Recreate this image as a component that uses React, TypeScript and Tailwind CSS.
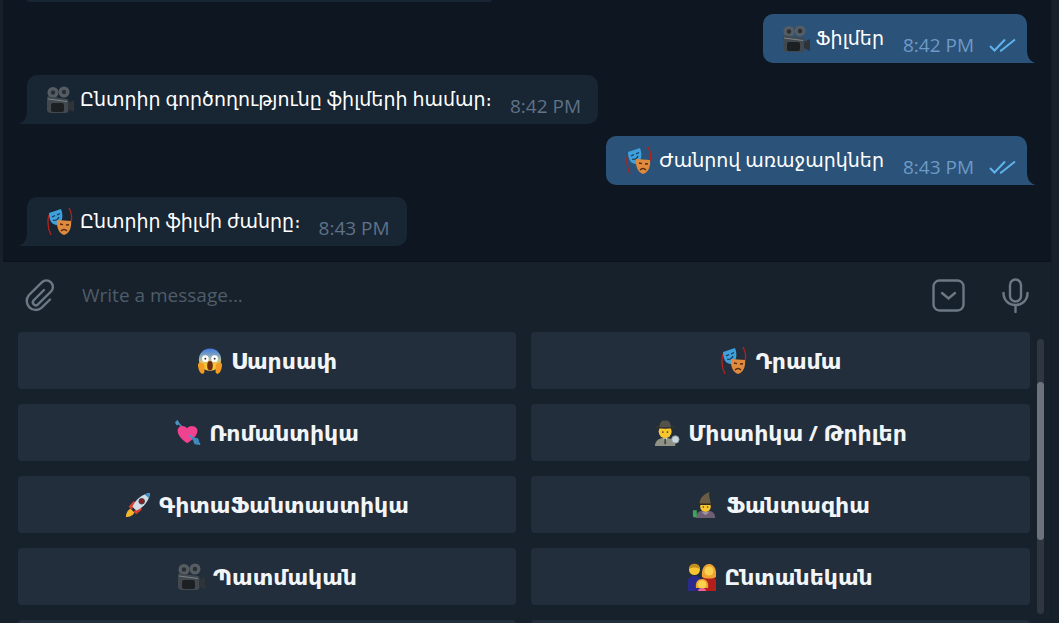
const Camera = () => (
  <svg viewBox="0 0 28 28" className="w-[28px] h-[28px] shrink-0">
    <circle cx="7" cy="6.500" r="5.500" fill="#555d63" />
    <circle cx="7" cy="6.500" r="2.200" fill="#2a2f33" />
    <circle cx="18" cy="6" r="5.500" fill="#555d63" />
    <circle cx="18" cy="6" r="2.200" fill="#2a2f33" />
    <path d="M1 12c0-1 1-2 2-1.500l18 2.500c1 .2 1.500 1 1.500 2V24c0 2-1 3-3 3H5c-2 0-4-1-4-3z" fill="#41484e" />
    <rect x="5" y="17" width="13" height="9" rx="2" fill="#1c2023" />
    <path d="M22 17l6-3v12l-6-3z" fill="#2f3438" />
    <path d="M2 13l19 2.500" stroke="#7b848b" strokeWidth="1" />
  </svg>
);

const Masks = () => (
  <svg viewBox="0 0 28 28" className="w-[28px] h-[28px] shrink-0">
    <path d="M3 7C1 14 2 21 5 27" stroke="#b3201c" strokeWidth="1.400" fill="none" />
    <path d="M23 0c3 5 3 10 2 14" stroke="#b3201c" strokeWidth="1.400" fill="none" />
    <path d="M3 5l12-4c2 5 2 11-1 14-2 3-6 2-8 0-2-2-3-6-3-10z" fill="#3fa0dc" />
    <path d="M6 9l3-1.500M11 7l3-1.500M7 12c2 1 5 0 6-3" stroke="#123c5c" strokeWidth="1.300" fill="none" />
    <path d="M11 12l14 1c1 6-2 13-7 14-5-1-8-9-7-15z" fill="#df8a3d" />
    <path d="M14 16l3 .6M20 17l3-.3M15 23c2-2 4-2 6 0" stroke="#5a2a0c" strokeWidth="1.400" fill="none" />
  </svg>
);

const Scream = () => (
  <svg viewBox="0 0 28 28" className="w-[26px] h-[26px] shrink-0">
    <defs>
      <linearGradient id="screamFace" x1="0" y1="0" x2="0" y2="1">
        <stop offset="0" stopColor="#3f7ae0" />
        <stop offset="0.45" stopColor="#9fb7b0" />
        <stop offset="0.7" stopColor="#f7c53c" />
      </linearGradient>
    </defs>
    <circle cx="14" cy="12.500" r="12" fill="url(#screamFace)" />
    <circle cx="9" cy="11.500" r="3.600" fill="#fff" />
    <circle cx="19" cy="11.500" r="3.600" fill="#fff" />
    <circle cx="9" cy="11.500" r="1" fill="#222" />
    <circle cx="19" cy="11.500" r="1" fill="#222" />
    <ellipse cx="14" cy="19" rx="3" ry="5" fill="#6b2a12" />
    <path d="M1 17c3-2 6-1 7 2v7c-1 2-3 2-4 1-2-2-3-6-3-10zM27 17c-3-2-6-1-7 2v7c1 2 3 2 4 1 2-2 3-6 3-10z" fill="#f39a22" />
  </svg>
);

const HeartArrow = () => (
  <svg viewBox="0 0 28 28" className="w-[26px] h-[26px] shrink-0">
    <path d="M1 1l26 25" stroke="#4d93c4" strokeWidth="1.500" />
    <path d="M13 25C6 20 2 15 3 10c1-4 7-5 10-1 3-4 9-3 11 1 1 5-3 10-11 15z" fill="#f0428f" />
    <path d="M15 16l5 4.500" stroke="#4d93c4" strokeWidth="2" />
    <path d="M18 18l3 8 6 1-2-7z" fill="#3e8abf" />
    <path d="M0 3l3-3 2 4-3 2z" fill="#4d93c4" />
  </svg>
);

const Detective = () => (
  <svg viewBox="0 0 28 28" className="w-[26px] h-[26px] shrink-0">
    <path d="M1 28c0-6 5-9 11-9s11 3 11 9z" fill="#8f9284" />
    <path d="M10 19l2 6 2-6z" fill="#eee" />
    <path d="M11 20h2v6h-2z" fill="#444" />
    <circle cx="12" cy="12.500" r="7" fill="#f8c62e" />
    <ellipse cx="12" cy="7.500" rx="11" ry="1.800" fill="#34332f" />
    <path d="M6 7.500c0-5 2-7 6-7s6 2 6 7z" fill="#55524c" />
    <circle cx="9.500" cy="13" r=".9" fill="#5a3a10" />
    <circle cx="14.500" cy="13" r=".9" fill="#5a3a10" />
    <circle cx="23" cy="21" r="4" fill="#c7d5dd" stroke="#8e99a0" />
  </svg>
);

const Rocket = () => (
  <svg viewBox="0 0 28 28" className="w-[26px] h-[26px] shrink-0">
    <path d="M4 16l5-6 3 1-5 8zM12 24l6-5-1-3-8 5z" fill="#d8412f" />
    <path d="M1 27c0-4 2-8 5-9l4 4c-1 3-5 5-9 5z" fill="#f6b62c" />
    <path d="M8 16C11 8 19 2 27 1c-1 8-7 16-15 19z" fill="#d3dde5" />
    <path d="M21 2.500l6-1.500-1 6z" fill="#3e8ec9" />
    <circle cx="18" cy="10" r="3" fill="#8c1d22" stroke="#3a3f46" />
  </svg>
);

const Mage = () => (
  <svg viewBox="0 0 28 28" className="w-[27px] h-[27px] shrink-0">
    <path d="M5 28c0-6 4-8 10-8s10 2 10 8z" fill="#6f5f72" />
    <path d="M11 22h8l-4 3z" fill="#a79bb0" />
    <circle cx="15" cy="16" r="5.500" fill="#f8c62e" />
    <path d="M5 13c5-1.500 15-1.500 20 0l-5 1.500H10z" fill="#2f2b24" />
    <path d="M9 13c0-5 3-9 10-12-1 4 1 8 1.500 12z" fill="#6b5d44" />
    <path d="M2 20h4v6c0 1-1 1.500-2 1.500S2 27 2 26z" fill="#3da55b" />
    <circle cx="12.800" cy="16.500" r=".8" fill="#5a3a10" />
    <circle cx="17.200" cy="16.500" r=".8" fill="#5a3a10" />
  </svg>
);

const Family = () => (
  <svg viewBox="0 0 28 28" className="w-[28px] h-[28px] shrink-0">
    <path d="M0 28V18c0-3 3-5 6.500-5s6.500 2 6.500 5v10z" fill="#2a2a8c" />
    <path d="M14 28V18c0-3 3-5 7-5s7 2 7 5v10z" fill="#b3201c" />
    <circle cx="6.500" cy="6.500" r="5.500" fill="#f8c62e" />
    <path d="M1 6c0-7 11-7 11 0-3-2-8-2-11 0z" fill="#c08f20" />
    <path d="M14 14c-1-9 3-13 7-13s8 4 7 13c-4 2-10 2-14 0z" fill="#efa332" />
    <circle cx="21" cy="8" r="4.500" fill="#f9d24e" />
    <path d="M8 25c-1-6 2-9 6-9s7 3 6 9z" fill="#efa332" />
    <circle cx="14" cy="21.500" r="4.200" fill="#f9d24e" />
    <path d="M10 28c0-2 2-3 4-3s4 1 4 3z" fill="#f0619a" />
  </svg>
);

const Ticks = () => (
  <svg viewBox="0 0 27 14" className="w-[27px] h-[14px] absolute right-[11px] bottom-[11px]" fill="none" stroke="#5fb3ee" strokeWidth="2">
    <path d="M1 8l4.500 4.500L16 1.500" />
    <path d="M11 12.500l1 .2L26 1.500" />
  </svg>
);

const Tail = ({ side }: { side: "left" | "right" }) =>
  side === "right" ? (
    <svg viewBox="0 0 9 13" className="w-[9px] h-[13px] absolute right-[-9px] bottom-0">
      <path d="M0 0C0 7 3 12 9 13H0z" fill="#2b5278" />
    </svg>
  ) : (
    <svg viewBox="0 0 10 13" className="w-[10px] h-[13px] absolute left-[-10px] bottom-0">
      <path d="M10 0C10 7 7 12 0 13h10z" fill="#182533" />
    </svg>
  );

const Incoming = ({ icon, text, time }: { icon: React.ReactNode; text: string; time: string }) => (
  <div className="relative self-start ml-[24px] h-[49px] rounded-[10px] rounded-bl-none bg-[#182533] flex pl-[19px] pr-[17px] text-white">
    <Tail side="left" />
    <div className="flex items-center gap-[6px] h-[46px] pt-[3px] text-[19px]">
      {icon}
      <span>{text}</span>
    </div>
    <span className="ml-[18px] mt-[20px] text-[19px] leading-[22px] text-[#5f7286]">{time}</span>
  </div>
);

const Outgoing = ({ icon, text, time }: { icon: React.ReactNode; text: string; time: string }) => (
  <div className="relative self-end mr-[24px] h-[49px] rounded-[10px] rounded-br-none bg-[#2b5278] flex pl-[19px] pr-[53px] text-white">
    <Tail side="right" />
    <div className="flex items-center gap-[6px] h-[46px] pt-[3px] text-[19px]">
      {icon}
      <span>{text}</span>
    </div>
    <span className="ml-[19px] mt-[20px] text-[19px] leading-[22px] text-[#6d9ac6]">{time}</span>
    <Ticks />
  </div>
);

const KeyButton = ({ icon, label }: { icon: React.ReactNode; label: string }) => (
  <button className="h-[57px] rounded-[4px] bg-[#232e3c] flex items-center justify-center gap-[8px] text-[22px] font-bold text-[#f2f5f8]">
    {icon}
    <span>{label}</span>
  </button>
);

export default function App() {
  return (
    <div className="relative w-[1059px] h-[623px] overflow-hidden flex bg-[#17212b] font-['Open_Sans','Noto_Sans','DejaVu_Sans',sans-serif]">
      <div className="w-[3px] shrink-0 bg-[#17212b]" />
      <div className="flex-1 flex flex-col min-w-0">
        <div className="h-[262px] shrink-0 bg-[#0e1621] flex flex-col gap-[12px] border-b border-[#0b1119]">
          <div className="absolute left-[27px] top-0 w-[465px] h-[2px] bg-[#182533] rounded-b-[6px]" />
          <div className="h-[2px] shrink-0" />
          <Outgoing icon={<Camera />} text="Ֆիլմեր" time="8:42 PM" />
          <Incoming icon={<Camera />} text="Ընտրիր գործողությունը ֆիլմերի համար։" time="8:42 PM" />
          <Outgoing icon={<Masks />} text="Ժանրով առաջարկներ" time="8:43 PM" />
          <Incoming icon={<Masks />} text="Ընտրիր ֆիլմի ժանրը։" time="8:43 PM" />
        </div>
        <div className="h-[70px] shrink-0 flex items-center pl-[22px] pr-[22px] pb-[4px]">
          <svg viewBox="5 3 30 34" className="w-[30px] h-[34px] shrink-0" fill="none" stroke="#6c7883" strokeWidth="2.400" strokeLinecap="round">
            <path d="M24 15L13.500 25.500a3 3 0 0 0 4.200 4.200L31 16.500a6.500 6.500 0 0 0-9.200-9.200L9 20a9 9 0 0 0 12.700 12.700L30 24.500" />
          </svg>
          <span className="ml-[27px] text-[19px] text-[#4f5c69]">Write a message...</span>
          <div className="flex-1" />
          <svg viewBox="0 0 33 33" className="w-[33px] h-[33px] shrink-0" fill="none" stroke="#6c7883" strokeWidth="2.400">
            <rect x="1.500" y="1.500" width="30" height="30" rx="6" />
            <path d="M10 14l6.500 5.500L23 14" strokeLinecap="round" />
          </svg>
          <svg viewBox="0 0 27 35" className="w-[27px] h-[35px] ml-[37px] shrink-0" fill="none" stroke="#6c7883" strokeWidth="2.400" strokeLinecap="round">
            <rect x="8" y="1.500" width="11" height="22" rx="5.500" />
            <path d="M1.500 15c0 7 5 12 12 12s12-5 12-12M13.500 27v7" />
          </svg>
        </div>
        <div className="grid grid-cols-[498px_499px] gap-x-[15px] gap-y-[15px] pl-[15px]">
          <KeyButton icon={<Scream />} label="Սարսափ" />
          <KeyButton icon={<Masks />} label="Դրամա" />
          <KeyButton icon={<HeartArrow />} label="Ռոմանտիկա" />
          <KeyButton icon={<Detective />} label="Միստիկա / Թրիլեր" />
          <KeyButton icon={<Rocket />} label="ԳիտաՖանտաստիկա" />
          <KeyButton icon={<Mage />} label="Ֆանտազիա" />
          <KeyButton icon={<Camera />} label="Պատմական" />
          <KeyButton icon={<Family />} label="Ընտանեկան" />
          <div className="h-[57px] rounded-[4px] bg-[#232e3c]" />
          <div className="h-[57px] rounded-[4px] bg-[#232e3c]" />
        </div>
      </div>
      <div className="w-[8px] shrink-0 bg-[#17212b] border-l border-[#141c25]" />
      <div className="absolute left-[1037px] top-[339px] w-[7px] h-[275px] rounded-full bg-[#30363f]">
        <div className="absolute left-0 top-[43px] w-[7px] h-[158px] rounded-full bg-[#6e737b]" />
      </div>
    </div>
  );
}
